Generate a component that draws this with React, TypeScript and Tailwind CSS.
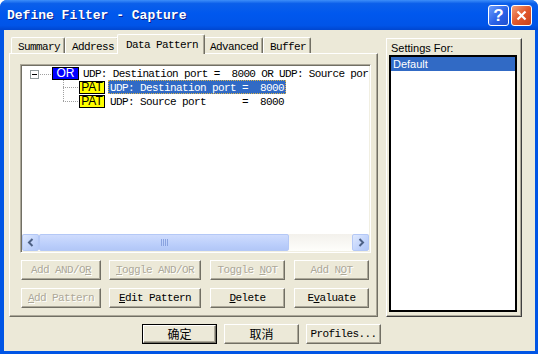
import React from 'react';

const MONO = "font-['Liberation_Mono','Courier_New',monospace] text-[11px] tracking-[-0.6px]";
const SANS = "font-['Liberation_Sans',Arial,sans-serif]";

function Btn({ w, children, disabled }: { w: string; children: React.ReactNode; disabled?: boolean }) {
  return (
    <div
      className={`${w} h-[20px] flex items-center justify-center bg-[#ece9d8] border border-t-white border-l-white border-r-[#716f64] border-b-[#716f64] shadow-[inset_-1px_-1px_0_#aca899] ${MONO} ${
        disabled ? 'text-[#aca899] [text-shadow:1px_1px_0_#fff]' : 'text-black'
      }`}
    >
      <span className="whitespace-pre leading-[14px]">{children}</span>
    </div>
  );
}

function Tab({ label, w, active }: { label: string; w: string; active?: boolean }) {
  if (active) {
    return (
      <div
        className={`${w} relative z-10 -mx-[2px] -mb-px h-[20px] px-[8px] flex items-start pt-[3px] bg-[#ece9d8] border-t border-l border-t-white border-l-white border-r border-r-[#716f64] shadow-[inset_-1px_0_0_#aca899] rounded-t-[2px] ${MONO}`}
      >
        <span className="whitespace-pre leading-[14px]">{label}</span>
      </div>
    );
  }
  return (
    <div
      className={`${w} h-[16px] px-[6px] flex items-start pt-[2px] border-t border-l border-t-white border-l-white border-r border-r-[#716f64] shadow-[inset_-1px_0_0_#aca899] rounded-t-[2px] ${MONO}`}
    >
      <span className="whitespace-pre leading-[14px]">{label}</span>
    </div>
  );
}

function Arrow({ dir }: { dir: 'l' | 'r' }) {
  return (
    <div className="w-[17px] h-[17px] shrink-0 rounded-[2px] border border-[#b4c8f6] bg-[linear-gradient(135deg,#dfe9fe,#c1d3fb_60%,#b1c7f7)] flex items-center justify-center">
      <svg width="8" height="9" viewBox="0 0 8 9">
        {dir === 'l' ? (
          <path d="M5.5 1 L2 4.5 L5.5 8" fill="none" stroke="#4d6185" strokeWidth="2" />
        ) : (
          <path d="M2.5 1 L6 4.5 L2.5 8" fill="none" stroke="#4d6185" strokeWidth="2" />
        )}
      </svg>
    </div>
  );
}

function Badge({ text, kind }: { text: string; kind: 'or' | 'pat' }) {
  return (
    <div
      className={`h-[13px] mt-[1px] shrink-0 flex items-center justify-center border border-black text-[12px] leading-[11px] tracking-normal ${SANS} ${
        kind === 'or' ? 'w-[27px] bg-[#0000ff] text-white' : 'w-[26px] bg-[#ffff00] text-black'
      }`}
    >
      {text}
    </div>
  );
}

export default function App() {
  return (
    <div className="w-[538px] h-[354px] flex flex-col bg-[#0055e5] rounded-t-[7px] overflow-hidden">
      {/* title bar */}
      <div className="h-[30px] shrink-0 flex items-center pl-[7px] pr-[6px] bg-[linear-gradient(180deg,#3d8ef9_0%,#0b5fea_12%,#0058ee_45%,#0054e8_85%,#0046cf_100%)]">
        <div className="flex-1 text-white font-bold text-[13px] font-['Liberation_Mono',monospace] [text-shadow:1px_1px_0_#0a1e8c] pt-[1px]">
          Define Filter - Capture
        </div>
        <div className="flex gap-[2px]">
          <div className={`w-[21px] h-[21px] rounded-[3px] border border-white bg-[linear-gradient(135deg,#6a9cfb,#2a62e8_55%,#1f4fd0)] flex items-center justify-center text-white font-bold text-[17px] leading-none ${SANS}`}>
            ?
          </div>
          <div className="w-[21px] h-[21px] rounded-[3px] border border-white bg-[linear-gradient(135deg,#f2a07a,#e2582c_50%,#c9421c)] flex items-center justify-center">
            <svg width="11" height="11" viewBox="0 0 11 11">
              <path d="M1.5 1.5 L9.5 9.5 M9.5 1.5 L1.5 9.5" stroke="#fff" strokeWidth="2.2" />
            </svg>
          </div>
        </div>
      </div>

      {/* client */}
      <div className="flex-1 ml-[4px] mr-[3px] mb-[3px] bg-[#ece9d8] flex flex-col">
        <div className="flex pt-[4px] pl-[5px]">
          {/* tab control */}
          <div className="w-[369px] flex flex-col">
            <div className="h-[19px] flex items-end pl-[2px]">
              <Tab label="Summary" w="w-[54px]" />
              <Tab label="Address" w="w-[54px]" />
              <Tab label="Data Pattern" w="w-[88px]" active />
              <Tab label="Advanced" w="w-[60px]" />
              <Tab label="Buffer" w="w-[48px]" />
            </div>
            <div className="h-[264px] border-t border-l border-t-white border-l-white border-r border-b border-r-[#716f64] border-b-[#716f64] shadow-[inset_-1px_-1px_0_#aca899] pl-[10px] pt-[10px]">
              {/* tree */}
              <div className="w-[351px] h-[189px] bg-white border border-t-[#aca899] border-l-[#aca899] border-r-white border-b-white shadow-[inset_1px_1px_0_#716f64,inset_-1px_-1px_0_#f1efe2] p-[1px] flex flex-col">
                <div className={`flex-1 overflow-hidden ${MONO}`}>
                  <div className="h-[14px] flex items-start whitespace-pre">
                    <div className="w-[8px] shrink-0" />
                    <div className="w-[9px] h-[9px] mt-[4px] shrink-0 border border-[#919b9c] bg-white flex items-center justify-center">
                      <div className="w-[5px] h-px bg-black" />
                    </div>
                    <svg width="11" height="14" className="mx-[1px] shrink-0">
                      <line x1="0" y1="8.5" x2="11" y2="8.5" stroke="#a0a0a0" strokeDasharray="1 1" />
                    </svg>
                    <Badge text="OR" kind="or" />
                    <span className="ml-[4px] leading-[14px] pt-[1px] tracking-[-0.66px]">UDP: Destination port =  8000 OR UDP: Source por</span>
                  </div>
                  <div className="h-[14px] flex items-start whitespace-pre">
                    <div className="w-[41px] shrink-0" />
                    <svg width="16" height="14" className="shrink-0">
                      <line x1="0.5" y1="0" x2="0.5" y2="14" stroke="#a0a0a0" strokeDasharray="1 1" />
                      <line x1="0" y1="7.5" x2="16" y2="7.5" stroke="#a0a0a0" strokeDasharray="1 1" />
                    </svg>
                    <Badge text="PAT" kind="pat" />
                    <span className="ml-[3px] h-[14px] px-[1px] bg-[#316ac5] text-white border border-dotted border-[#d9b44a] leading-[12px] pt-[1px]">
                      UDP: Destination port =  8000
                    </span>
                  </div>
                  <div className="h-[14px] flex items-start whitespace-pre">
                    <div className="w-[41px] shrink-0" />
                    <svg width="16" height="14" className="shrink-0">
                      <line x1="0.5" y1="0" x2="0.5" y2="7" stroke="#a0a0a0" strokeDasharray="1 1" />
                      <line x1="0" y1="7.5" x2="16" y2="7.5" stroke="#a0a0a0" strokeDasharray="1 1" />
                    </svg>
                    <Badge text="PAT" kind="pat" />
                    <span className="ml-[5px] leading-[14px] pt-[1px]">UDP: Source port      =  8000</span>
                  </div>
                </div>
                <div className="h-[17px] flex bg-[linear-gradient(180deg,#f3f1ec,#fefefb)]">
                  <Arrow dir="l" />
                  <div className="w-[250px] h-[17px] shrink-0 rounded-[2px] border border-[#b4c8f6] bg-[linear-gradient(180deg,#cfdcfd,#bccffb_60%,#b2c7f7)] flex items-center justify-center">
                    <div className="flex gap-[1px]">
                      <div className="w-px h-[7px] bg-[#8aa3e0]" />
                      <div className="w-px h-[7px] bg-[#8aa3e0]" />
                      <div className="w-px h-[7px] bg-[#8aa3e0]" />
                      <div className="w-px h-[7px] bg-[#8aa3e0]" />
                    </div>
                  </div>
                  <div className="flex-1" />
                  <Arrow dir="r" />
                </div>
              </div>

              {/* buttons */}
              <div className="flex mt-[7px] pl-[1px]">
                <Btn w="w-[80px]" disabled>
                  Add AND/O<span className="underline">R</span>
                </Btn>
                <div className="w-[8px]" />
                <Btn w="w-[92px]" disabled>
                  <span className="underline">T</span>oggle AND/OR
                </Btn>
                <div className="w-[9px]" />
                <Btn w="w-[75px]" disabled>
                  Toggle <span className="underline">N</span>OT
                </Btn>
                <div className="w-[9px]" />
                <Btn w="w-[75px]" disabled>
                  Add N<span className="underline">O</span>T
                </Btn>
              </div>
              <div className="flex mt-[8px] pl-[1px]">
                <Btn w="w-[80px]" disabled>
                  <span className="underline">A</span>dd Pattern
                </Btn>
                <div className="w-[8px]" />
                <Btn w="w-[92px]">
                  <span className="underline">E</span>dit Pattern
                </Btn>
                <div className="w-[9px]" />
                <Btn w="w-[75px]">
                  <span className="underline">D</span>elete
                </Btn>
                <div className="w-[9px]" />
                <Btn w="w-[75px]">
                  E<span className="underline">v</span>aluate
                </Btn>
              </div>
            </div>
          </div>

          {/* settings for */}
          <div className="ml-[8px] mt-[4px] w-[136px] h-[279px] border border-t-white border-l-white border-r-[#404040] border-b-[#404040] shadow-[inset_-1px_-1px_0_#aca899] pl-[2px] pr-[2px] pt-[3px] flex flex-col">
            <div className={`h-[13px] text-[11px] leading-[13px] pl-[2px] text-black ${SANS}`}>Settings For:</div>
            <div className="w-[128px] h-[257px] border-2 border-black bg-white">
              <div className={`h-[14px] bg-[#316ac5] text-white text-[11px] leading-[14px] pl-[2px] ${SANS}`}>Default</div>
            </div>
          </div>
        </div>

        {/* bottom buttons */}
        <div className="flex mt-[7px] pl-[138px] gap-[7px]">
          <div className="w-[75px] h-[20px] border border-black">
            <div className="w-full h-full flex items-center justify-center border border-t-white border-l-white border-r-[#716f64] border-b-[#716f64] shadow-[inset_-1px_-1px_0_#aca899] text-[12px] font-['Noto_Sans_CJK_SC',sans-serif] leading-none">
              确定
            </div>
          </div>
          <div className="w-[75px] h-[20px] flex items-center justify-center border border-t-white border-l-white border-r-[#716f64] border-b-[#716f64] shadow-[inset_-1px_-1px_0_#aca899] text-[12px] font-['Noto_Sans_CJK_SC',sans-serif] leading-none">
            取消
          </div>
          <Btn w="w-[75px]">Profiles...</Btn>
        </div>
      </div>
    </div>
  );
}
